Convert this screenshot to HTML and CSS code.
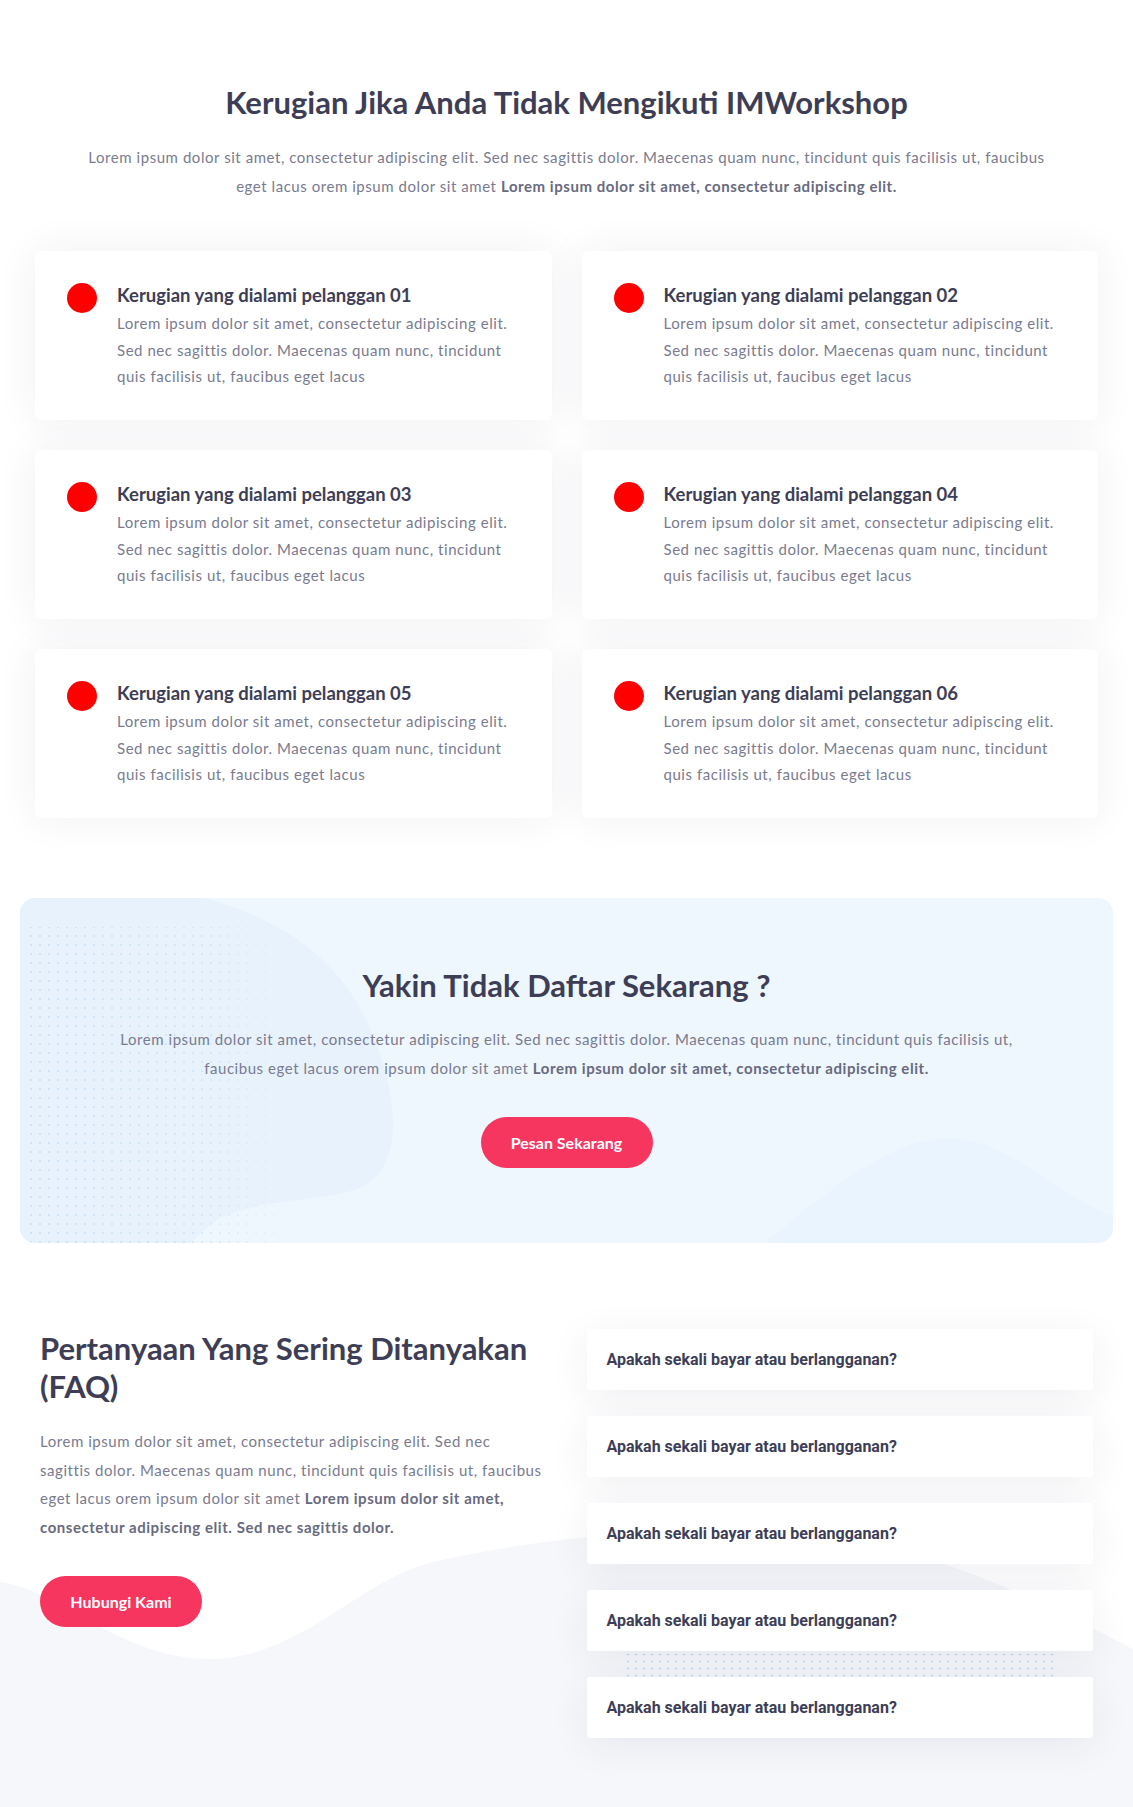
FILE: index.html
```html
<!DOCTYPE html>
<html lang="id">
<head>
<meta charset="utf-8">
<title>IMWorkshop</title>
<link rel="stylesheet" href="styles.css">
</head>
<body>
<section class="losses">
  <h2 class="title">Kerugian Jika Anda Tidak Mengikuti IMWorkshop</h2>
  <p class="lead">Lorem ipsum dolor sit amet, consectetur adipiscing elit. Sed nec sagittis dolor. Maecenas quam nunc, tincidunt quis facilisis ut, faucibus eget lacus orem ipsum dolor sit amet <strong>Lorem ipsum dolor sit amet, consectetur adipiscing elit.</strong></p>
  <div class="cards">
    <div class="card"><span class="dot"></span><div class="card-body"><h3>Kerugian yang dialami pelanggan 01</h3><p>Lorem ipsum dolor sit amet, consectetur adipiscing elit. Sed nec sagittis dolor. Maecenas quam nunc, tincidunt quis facilisis ut, faucibus eget lacus</p></div></div>
    <div class="card"><span class="dot"></span><div class="card-body"><h3>Kerugian yang dialami pelanggan 02</h3><p>Lorem ipsum dolor sit amet, consectetur adipiscing elit. Sed nec sagittis dolor. Maecenas quam nunc, tincidunt quis facilisis ut, faucibus eget lacus</p></div></div>
    <div class="card"><span class="dot"></span><div class="card-body"><h3>Kerugian yang dialami pelanggan 03</h3><p>Lorem ipsum dolor sit amet, consectetur adipiscing elit. Sed nec sagittis dolor. Maecenas quam nunc, tincidunt quis facilisis ut, faucibus eget lacus</p></div></div>
    <div class="card"><span class="dot"></span><div class="card-body"><h3>Kerugian yang dialami pelanggan 04</h3><p>Lorem ipsum dolor sit amet, consectetur adipiscing elit. Sed nec sagittis dolor. Maecenas quam nunc, tincidunt quis facilisis ut, faucibus eget lacus</p></div></div>
    <div class="card"><span class="dot"></span><div class="card-body"><h3>Kerugian yang dialami pelanggan 05</h3><p>Lorem ipsum dolor sit amet, consectetur adipiscing elit. Sed nec sagittis dolor. Maecenas quam nunc, tincidunt quis facilisis ut, faucibus eget lacus</p></div></div>
    <div class="card"><span class="dot"></span><div class="card-body"><h3>Kerugian yang dialami pelanggan 06</h3><p>Lorem ipsum dolor sit amet, consectetur adipiscing elit. Sed nec sagittis dolor. Maecenas quam nunc, tincidunt quis facilisis ut, faucibus eget lacus</p></div></div>
  </div>
</section>

<section class="cta-wrap">
  <div class="cta">
    <svg class="cta-bg" viewBox="0 0 1093 345" preserveAspectRatio="none" aria-hidden="true">
      <defs>
        <pattern id="dots" width="9" height="9" patternUnits="userSpaceOnUse">
          <circle cx="2" cy="2" r="0.8" fill="#9ccdf2"/>
        </pattern>
        <linearGradient id="fade" x1="0" y1="0" x2="1" y2="0">
          <stop offset="0" stop-color="#fff" stop-opacity="0.9"/>
          <stop offset="0.7" stop-color="#fff" stop-opacity="0.6"/>
          <stop offset="1" stop-color="#fff" stop-opacity="0"/>
        </linearGradient>
        <mask id="dotmask">
          <rect x="0" y="0" width="270" height="345" fill="url(#fade)"/>
        </mask>
      </defs>
      <path d="M0,0 L183,0 C260,20 320,60 350,130 C380,200 385,270 340,290 C300,305 240,300 200,320 C185,330 175,340 171,345 L0,345 Z" fill="#e8f2fd"/>
      <path d="M745,345 C800,300 870,240 927,240 C990,240 1040,300 1093,318 L1093,345 Z" fill="#eaf4fe"/>
      <rect x="9" y="29" width="250" height="316" fill="url(#dots)" mask="url(#dotmask)"/>
    </svg>
    <div class="cta-content">
      <h2 class="cta-title">Yakin Tidak Daftar Sekarang ?</h2>
      <p class="cta-text">Lorem ipsum dolor sit amet, consectetur adipiscing elit. Sed nec sagittis dolor. Maecenas quam nunc, tincidunt quis facilisis ut, faucibus eget lacus orem ipsum dolor sit amet <strong>Lorem ipsum dolor sit amet, consectetur adipiscing elit.</strong></p>
      <a class="btn btn-cta" href="#">Pesan Sekarang</a>
    </div>
  </div>
</section>

<section class="faq">
  <svg class="faq-wave" viewBox="0 0 1133 300" preserveAspectRatio="none" aria-hidden="true">
    <path d="M0,73 C60,80 120,150 210,150 C300,150 360,70 433,53 C520,33 640,18 760,22 C900,28 1000,70 1133,140 L1133,300 L0,300 Z" fill="#f6f7fa"/>
  </svg>
  <div class="faq-inner">
    <div class="faq-left">
      <h2 class="faq-title">Pertanyaan Yang Sering Ditanyakan (FAQ)</h2>
      <p class="faq-text">Lorem ipsum dolor sit amet, consectetur adipiscing elit. Sed nec sagittis dolor. Maecenas quam nunc, tincidunt quis facilisis ut, faucibus eget lacus orem ipsum dolor sit amet <strong>Lorem ipsum dolor sit amet, consectetur adipiscing elit. Sed nec sagittis dolor.</strong></p>
      <a class="btn btn-faq" href="#">Hubungi Kami</a>
    </div>
    <div class="faq-list">
      <div class="faq-dots"></div>
      <div class="faq-item">Apakah sekali bayar atau berlangganan?</div>
      <div class="faq-item">Apakah sekali bayar atau berlangganan?</div>
      <div class="faq-item">Apakah sekali bayar atau berlangganan?</div>
      <div class="faq-item">Apakah sekali bayar atau berlangganan?</div>
      <div class="faq-item">Apakah sekali bayar atau berlangganan?</div>
    </div>
  </div>
</section>
</body>
</html>
```

FILE: styles.css
```css
* { box-sizing: border-box; }

body {
  margin: 0;
  background: #ffffff;
  font-family: "Lato", "Noto Sans", sans-serif;
  color: #7a7b8f;
}

h2, h3, p { margin: 0; }

strong { font-weight: 700; color: #686a7e; }

/* ---------- Section 1 ---------- */
.losses {
  padding-top: 83px;
  display: flex;
  flex-direction: column;
  align-items: center;
}

.title {
  font-family: "Lato", sans-serif;
  font-weight: 700;
  font-size: 31px;
  line-height: 38px;
  color: #3d3e56;
  text-align: center;
}

.lead {
  margin-top: 22px;
  max-width: 975px;
  font-size: 15px;
  letter-spacing: 0.55px;
  line-height: 29px;
  text-align: center;
}

.cards {
  margin-top: 50px;
  width: 1063px;
  display: grid;
  grid-template-columns: 1fr 1fr;
  column-gap: 30px;
  row-gap: 30px;
}

.card {
  background: #ffffff;
  border-radius: 6px;
  box-shadow: 0 0 40px rgba(40, 40, 80, 0.07);
  padding: 31px 30px 30px 32px;
  display: flex;
  align-items: flex-start;
  gap: 20px;
  height: 169px;
}

.dot {
  flex: 0 0 30px;
  width: 30px;
  height: 30px;
  margin-top: 1px;
  border-radius: 50%;
  background: #ff0000;
}

.card-body h3 {
  font-family: "Lato", sans-serif;
  font-weight: 700;
  font-size: 18.5px;
  line-height: 26px;
  color: #3d3e56;
}

.card-body p {
  margin-top: 2px;
  font-size: 15px;
  letter-spacing: 0.55px;
  line-height: 26.5px;
}

/* ---------- CTA ---------- */
.cta-wrap {
  padding: 80px 20px 0;
}

.cta {
  position: relative;
  overflow: hidden;
  border-radius: 15px;
  background: #eef6fe;
  height: 345px;
}

.cta-bg {
  position: absolute;
  left: 0;
  top: 0;
  width: 100%;
  height: 100%;
}

.cta-content {
  position: relative;
  padding-top: 69px;
  display: flex;
  flex-direction: column;
  align-items: center;
}

.cta-title {
  font-family: "Lato", sans-serif;
  font-weight: 700;
  font-size: 31px;
  line-height: 36px;
  color: #3d3e56;
}

.cta-text {
  margin-top: 22px;
  max-width: 920px;
  font-size: 15px;
  letter-spacing: 0.55px;
  line-height: 29px;
  text-align: center;
}

.btn {
  display: flex;
  align-items: center;
  justify-content: center;
  height: 51px;
  border-radius: 26px;
  background: #f6365f;
  color: #ffffff;
  font-family: "Lato", sans-serif;
  font-weight: 700;
  font-size: 16px;
  text-decoration: none;
}

.btn-cta {
  margin-top: 34px;
  width: 172px;
}

/* ---------- FAQ ---------- */
.faq {
  position: relative;
  padding: 86px 0 71px;
}

.faq-wave {
  position: absolute;
  left: 0;
  bottom: 0;
  width: 100%;
  height: 300px;
}

.faq-inner {
  position: relative;
  width: 1053px;
  margin: 0 auto;
  display: grid;
  grid-template-columns: 1fr 1fr;
  column-gap: 40px;
}

.faq-title {
  font-family: "Lato", sans-serif;
  font-weight: 700;
  font-size: 31px;
  line-height: 38px;
  color: #3d3e56;
}

.faq-text {
  margin-top: 22px;
  max-width: 503px;
  font-size: 15px;
  letter-spacing: 0.55px;
  line-height: 28.7px;
}

.btn-faq {
  margin-top: 34px;
  width: 162px;
}

.faq-list {
  position: relative;
  display: flex;
  flex-direction: column;
  gap: 26px;
}

.faq-dots {
  position: absolute;
  left: 37px;
  right: 36px;
  top: 322px;
  height: 26px;
  background-image: radial-gradient(circle, #a9d3f3 0.8px, transparent 1.2px);
  background-size: 8px 7px;
  opacity: 0.8;
}

.faq-item {
  position: relative;
  height: 61px;
  display: flex;
  align-items: center;
  padding-left: 20px;
  background: #ffffff;
  border-radius: 3px;
  box-shadow: 0 8px 40px rgba(40, 40, 80, 0.07);
  font-family: "Roboto", sans-serif;
  font-weight: 700;
  font-size: 16px;
  color: #3d3e56;
}
```
